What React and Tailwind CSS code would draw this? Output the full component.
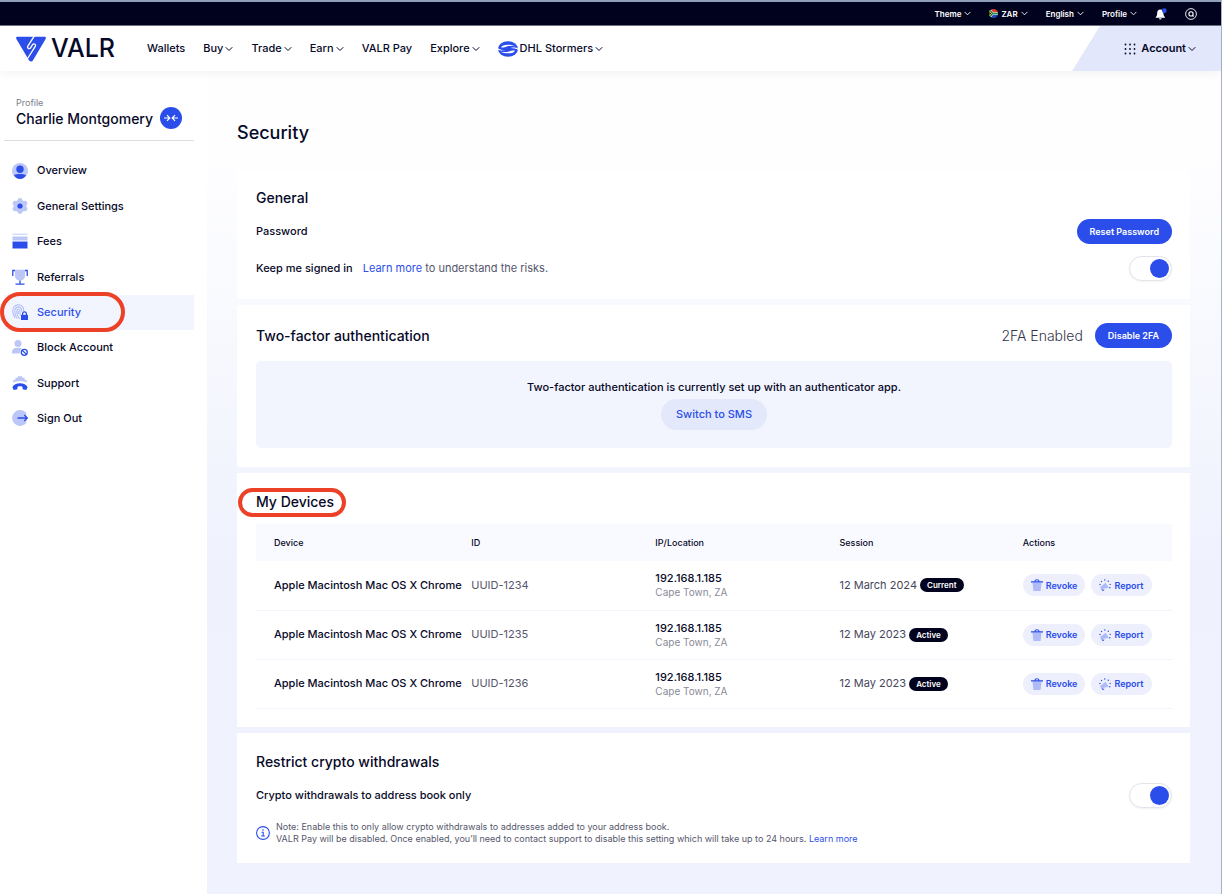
import { useState } from "react";

const Chevron = ({ className = "w-2 h-2" }) => (
  <svg className={className} viewBox="0 0 8 8" fill="none" stroke="currentColor" strokeWidth="1" strokeLinecap="round" strokeLinejoin="round" aria-hidden="true">
    <path d="M1 2.500 4 5.500 7 2.500" />
  </svg>
);

const icons = {
  overview: (
    <>
      <circle cx="8" cy="8" r="8" fill="#bcc7f8" />
      <circle cx="8" cy="6.200" r="3.700" fill="#2b4eea" />
      <path d="M2 12.200C4 10.900 6 11 8 11s4 0 6 1.200C12.700 14.600 10.500 16 8 16s-4.700-1.400-6-3.800Z" fill="#2b4eea" />
    </>
  ),
  settings: (
    <>
      <g fill="#bcc7f8">
        <circle cx="8" cy="8" r="6.300" />
        <circle cx="8" cy="2.500" r="2.400" />
        <circle cx="8" cy="13.500" r="2.400" />
        <circle cx="3.200" cy="5.200" r="2.500" />
        <circle cx="12.800" cy="5.200" r="2.500" />
        <circle cx="3.200" cy="10.800" r="2.500" />
        <circle cx="12.800" cy="10.800" r="2.500" />
      </g>
      <circle cx="8" cy="8" r="2.600" fill="#2b4eea" />
    </>
  ),
  fees: (
    <>
      <path d="M0.500 0.500h15v1.500h-15z" fill="#d5dcfb" />
      <path d="M0.500 3.500h15v4h-15z" fill="#bcc7f8" />
      <path d="M0.500 8.500h15v7h-15z" fill="#2b4eea" />
    </>
  ),
  referrals: (
    <>
      <path d="M3 .8h10v6.200c0 2.800-2 4.500-5 4.500S3 9.800 3 7Z" fill="#bcc7f8" />
      <path d="M3 1.500H.8V7M13 1.500h2.200V7M8 11.500V15M3.500 15.200h9" fill="none" stroke="#2b4eea" strokeWidth="1.300" />
    </>
  ),
  security: (
    <>
      <g fill="none" stroke="#b3bff6" strokeWidth="1.100" strokeLinecap="round">
        <path d="M3 13.500C1.300 11.500.8 9.500.8 7.300.8 3.500 3 .9 6.300.9s5.400 2.500 5.400 6" />
        <path d="M5 14.200C3.400 12 2.800 10 2.800 7.600c0-2.700 1.200-4.500 3.500-4.500s3.500 1.700 3.500 4.400" />
        <path d="M7.300 14.400C5.300 12 4.700 10 4.700 7.700c0-1.500.5-2.400 1.600-2.400s1.600 1 1.600 2.400c0 1.400.2 2.500.6 3.500" />
        <path d="M6.300 7.500v2" />
      </g>
      <path d="M9 10.800h7V16H9z" fill="#2b4eea" />
      <path d="M10.600 11V9.700a1.900 1.900 0 0 1 3.800 0V11" fill="none" stroke="#2b4eea" strokeWidth="1.200" />
    </>
  ),
  block: (
    <>
      <circle cx="6" cy="3.500" r="3.500" fill="#bcc7f8" />
      <path d="M0 13.500V12c0-2.500 2-4.200 4.500-4.200h3c1 0 1.800.2 2.400.7A5 5 0 0 0 8 13.500Z" fill="#bcc7f8" />
      <circle cx="12.300" cy="12.300" r="3" fill="none" stroke="#2b4eea" strokeWidth="1.300" />
      <path d="m10.200 10.200 4.200 4.200" stroke="#2b4eea" strokeWidth="1.300" />
    </>
  ),
  support: (
    <>
      <path d="M.8 7.500 1.500 5 3.300 4.800 3.500 2.800 5.500 2.700 6.300.8 8 1.500 9.700.8 10.500 2.700 12.500 2.800 12.700 4.800 14.500 5 15.200 7.500C11 5.800 5 5.800.8 7.500Z" fill="#bcc7f8" />
      <path d="M.4 12.200C1.500 9.800 4.500 8.300 8 8.300s6.500 1.500 7.600 3.900l-1.300 2.800-3.600-.8-.3-2.500c-1.500-.6-3.300-.6-4.800 0l-.3 2.500-3.600.8Z" fill="#2b4eea" />
    </>
  ),
  signout: (
    <>
      <path d="M14.300 3A8 8 0 1 0 14.300 13Z" fill="#bcc7f8" />
      <path d="M5.500 8h9.800M12.300 5l3 3-3 3" fill="none" stroke="#2b4eea" strokeWidth="1.400" />
    </>
  ),
};

const sideItems = [
  ["Overview", "overview"],
  ["General Settings", "settings"],
  ["Fees", "fees"],
  ["Referrals", "referrals"],
  ["Security", "security"],
  ["Block Account", "block"],
  ["Support", "support"],
  ["Sign Out", "signout"],
];

const devices = [
  { id: "UUID-1234", date: "12 March 2024", status: "Current" },
  { id: "UUID-1235", date: "12 May 2023", status: "Active" },
  { id: "UUID-1236", date: "12 May 2023", status: "Active" },
];

function Toggle({ id }) {
  const [on, setOn] = useState(true);
  return (
    <input
      id={id}
      type="checkbox"
      role="switch"
      checked={on}
      onChange={(e) => setOn(e.target.checked)}
      className="flex h-[25px] w-[43px] shrink-0 cursor-pointer appearance-none items-center rounded-full border border-[#e3e4ea] bg-white px-[2px] shadow-xs before:block before:size-[19px] before:rounded-full before:bg-gray-400 checked:justify-end checked:before:bg-[#2b4eea]"
    />
  );
}

function TopButton({ children }) {
  return (
    <button type="button" className="flex items-center gap-[3px]">
      {children}
      <Chevron className="size-[7px]" />
    </button>
  );
}

function NavLink({ children, menu }) {
  return menu ? (
    <button type="button" className="flex items-center gap-[2px]">
      {children}
      <Chevron />
    </button>
  ) : (
    <a href="#">{children}</a>
  );
}

function Header() {
  return (
    <header className="relative">
      <div className="flex h-[26px] items-center justify-end border-t-2 border-b border-t-[#929fbb] border-b-[#6d6f84] bg-[#01031e] pr-6 text-[8px] font-semibold text-white">
        <div className="flex items-center gap-[18px]">
          <TopButton>Theme</TopButton>
          <TopButton>
            <svg className="size-[9px]" viewBox="0 0 10 10" aria-hidden="true">
              <clipPath id="flag"><circle cx="5" cy="5" r="5" /></clipPath>
              <g clipPath="url(#flag)">
                <path d="M0 0h10v5H0z" fill="#e0392b" />
                <path d="M0 5h10v5H0z" fill="#2447b8" />
                <path d="M0 0 4 5h6M0 10l4-5" stroke="#fff" strokeWidth="2.600" fill="none" />
                <path d="M0 0 4 5h6M0 10l4-5" stroke="#1d8a4e" strokeWidth="1.600" fill="none" />
                <path d="M0 2 2.700 5 0 8Z" fill="#111" stroke="#f5b921" strokeWidth=".9" />
              </g>
            </svg>
            ZAR
          </TopButton>
          <TopButton>English</TopButton>
          <TopButton>Profile</TopButton>
          <button type="button" aria-label="Notifications">
            <svg className="size-[12px]" viewBox="0 0 12 12" aria-hidden="true">
              <path d="M5.300 1.500c2 0 3.100 1.500 3.100 3.500 0 2.200.6 3.200 1.600 4.100v.7H.7v-.7c1-.9 1.500-1.900 1.500-4.100 0-2 1.100-3.500 3.100-3.500Z" fill="#fff" />
              <path d="M4 10.300h2.700a1.350 1.300 0 0 1-2.700 0Z" fill="#fff" />
              <circle cx="9.300" cy="2.700" r="2.400" fill="#2b4eea" />
            </svg>
          </button>
          <button type="button" aria-label="Search">
            <svg className="size-[12px]" viewBox="0 0 12 12" fill="none" stroke="#fff" aria-hidden="true">
              <circle cx="6" cy="6" r="5.400" strokeWidth=".9" />
              <circle cx="6" cy="5.900" r="2.100" strokeWidth="1.100" />
              <path d="m7.400 7.300 1.200 1.200" strokeWidth="1.100" />
            </svg>
          </button>
        </div>
      </div>
      <div className="flex h-[45px] items-center bg-white pl-4 shadow-[0_2px_10px_rgba(0,0,0,0.05)]">
        <a href="#" className="flex w-[131px] items-center gap-[5px]">
          <svg className="h-[26px] w-[30px] shrink-0" viewBox="0 0 30 26" aria-hidden="true">
            <path d="M1.600.7h26.800c1.300 0 1.900 1 1.200 2.200L16.900 24.400c-.9 1.500-2.900 1.500-3.800 0L.4 2.900C-.3 1.700.3.700 1.600.7Z" fill="#2b4eea" />
            <path d="M18.400-.2 12 9.800c-.8 1.400-.4 2.300.5 2.700.8.400 1.600.1 2.200-.9l1.700-2.700c.7-1 1.500-1.300 2.300-.9.900.5 1.200 1.300.4 2.600L11.600 22.500" fill="none" stroke="#fff" strokeWidth="1.300" />
          </svg>
          <span className="text-[25px] leading-none font-medium">VALR</span>
        </a>
        <nav aria-label="Main" className="flex items-center gap-[18px] text-[11px] font-medium whitespace-nowrap">
          <NavLink>Wallets</NavLink>
          <NavLink menu>Buy</NavLink>
          <NavLink menu>Trade</NavLink>
          <NavLink menu>Earn</NavLink>
          <NavLink>VALR Pay</NavLink>
          <NavLink menu>Explore</NavLink>
          <NavLink menu>
            <svg className="h-[16px] w-[20px]" viewBox="0 0 20 16" aria-hidden="true">
              <ellipse cx="10" cy="8" rx="10" ry="7.700" fill="#2b4eea" />
              <g fill="#fff">
                <path d="M3 6.300C4 3.500 11 2.500 17.800 5.300 12.500 4.800 9 5 8.300 5.800 7.500 6.500 4 6.800 3 6.300Z" />
                <path d="M17 9.700C16 12.500 9 13.500 2.200 10.700 7.500 11.200 11 11 11.700 10.200 12.500 9.500 16 9.200 17 9.700Z" />
                <path d="M0 7.200C1.500 8.600 4.500 8.900 7.500 9 4.500 9.700 1.500 9.600 0 8.800Z" />
                <path d="M20 8.800C18.500 7.400 15.500 7.100 12.500 7 15.500 6.300 18.500 6.400 20 7.200Z" />
              </g>
            </svg>
            DHL Stormers
          </NavLink>
        </nav>
        <button type="button" className="ml-auto flex h-full w-[149px] items-center justify-end gap-[5px] bg-[#e2e7fb] pr-[25px] text-[11px] font-semibold [clip-path:polygon(28px_0,100%_0,100%_100%,0_100%)]">
          <svg className="size-[12px]" viewBox="0 0 12 12" fill="currentColor" aria-hidden="true">
            {[1.5, 6, 10.5].map((y) => [1.5, 6, 10.5].map((x) => <circle key={x + "-" + y} cx={x} cy={y} r=".9" />))}
          </svg>
          <span className="flex items-center gap-[2px]">
            Account
            <Chevron />
          </span>
        </button>
      </div>
    </header>
  );
}

function Sidebar() {
  return (
    <aside className="w-[207px] shrink-0 bg-white pr-[13px] pl-1">
      <div className="flex h-[70px] items-end justify-between border-b border-[#dcdde1] px-3 pb-[11px]">
        <div>
          <p className="text-[9px] leading-[12px] text-[#7d7e8c]">Profile</p>
          <p className="text-[14px] leading-[20px] font-medium whitespace-nowrap">Charlie Montgomery</p>
        </div>
        <button type="button" aria-label="Switch profile" className="flex size-[22px] items-center justify-center rounded-full bg-[#2b4eea]">
          <svg className="h-[8px] w-[14px]" viewBox="0 0 14 8" fill="none" stroke="#fff" strokeWidth="1.200" aria-hidden="true">
            <path d="M0 4h5.500M3 1.200 5.800 4 3 6.800M14 4H8.500M11 1.200 8.200 4 11 6.800" />
          </svg>
        </button>
      </div>
      <nav aria-label="Profile" className="mt-3 grid h-[283px] auto-rows-fr text-[11px] font-medium">
        {sideItems.map(([label, icon]) => (
          <a
            key={label}
            href="#"
            className={
              icon === "security"
                ? "relative flex items-center gap-[9px] bg-[#f3f5fe] pl-2 text-[#2b4eea]"
                : "relative flex items-center gap-[9px] pl-2"
            }
          >
            <svg className="size-[16px]" viewBox="0 0 16 16" aria-hidden="true">{icons[icon]}</svg>
            {label}
            {icon === "security" && <span className="absolute -top-[3px] -left-1 h-[40px] w-[125px] rounded-full border-4 border-[#ec4126]" />}
          </a>
        ))}
      </nav>
    </aside>
  );
}

const primary = "h-[25px] rounded-full bg-[#2b4eea] px-[13px] text-[9px] font-semibold text-white";
const pill = "flex h-[22px] items-center gap-[3px] rounded-full bg-[#edeffd] px-2 text-[9px] font-semibold text-[#2b4eea]";

function Devices() {
  return (
    <table className="mt-[10px] w-full table-fixed border-collapse text-left text-[11px]">
      <thead className="bg-[#f9faff] text-[9px]">
        <tr className="h-[37px]">
          <th scope="col" className="w-[23.5%] pl-[18px] font-medium">Device</th>
          <th scope="col" className="w-[20.1%] font-medium">ID</th>
          <th scope="col" className="w-[20.1%] font-medium">IP/Location</th>
          <th scope="col" className="w-[20%] font-medium">Session</th>
          <th scope="col" className="font-medium">Actions</th>
        </tr>
      </thead>
      <tbody>
        {devices.map((d) => (
          <tr key={d.id} className="h-[49px] border-b border-[#f3f4fb] whitespace-nowrap">
            <td className="pl-[18px] font-medium">Apple Macintosh Mac OS X Chrome</td>
            <td className="text-[#55576b]">{d.id}</td>
            <td className="leading-[14px]">
              <div className="font-medium">192.168.1.185</div>
              <div className="text-[10px] text-[#8a8b98]">Cape Town, ZA</div>
            </td>
            <td>
              <div className="flex items-center gap-[3px]">
                <span className="text-[#45475c]">{d.date}</span>
                <span className="flex h-[14px] items-center rounded-full bg-[#01031e] px-[7px] text-[8px] font-semibold text-white">{d.status}</span>
              </div>
            </td>
            <td>
              <div className="flex gap-[6px]">
                <button type="button" className={pill}>
                  <svg className="size-[12px]" viewBox="0 0 12 12" aria-hidden="true">
                    <path d="M1.500 3.500h9L9.600 12H2.400Z" fill="#aebbf6" />
                    <path d="M0 2.900h12M4 2.700C4 1.200 4.800.7 6 .7s2 .5 2 2" fill="none" stroke="#2b4eea" strokeWidth="1.100" />
                  </svg>
                  Revoke
                </button>
                <button type="button" className={pill}>
                  <svg className="size-[12px]" viewBox="0 0 12 12" aria-hidden="true">
                    <path d="m6.500 3.800 3.300 5L2.300 10.300 1 8.300Z" fill="#aebbf6" />
                    <g fill="#2b4eea">
                      <circle cx="5.800" cy="1" r=".7" /><circle cx="9.300" cy="2.200" r=".7" /><circle cx="2.500" cy="2.500" r=".7" />
                      <circle cx="11.200" cy="5.400" r=".7" /><circle cx="1" cy="5.500" r=".7" /><circle cx="10.800" cy="8.800" r=".7" />
                    </g>
                    <path d="M3 10.200 3.500 11.500 5.200 11" fill="none" stroke="#2b4eea" />
                  </svg>
                  Report
                </button>
              </div>
            </td>
          </tr>
        ))}
      </tbody>
    </table>
  );
}

const card = "bg-white pr-[18px] pl-[19px]";
const heading = "text-[14px] leading-[24px] font-medium";

export default function App() {
  return (
    <div className="flex min-h-screen flex-col border-r border-[#a9b1c3] bg-white font-['Inter','Liberation_Sans',sans-serif] text-[#070928]">
      <Header />
      <div className="flex flex-1">
        <Sidebar />
        <main className="min-w-0 flex-1 bg-linear-to-b from-[#fefeff] from-10% via-[#eff2fd] via-60% to-[#f0f3fd] pt-[50px] pr-[31px] pb-[30px] pl-[30px]">
          <h1 className="text-[18px] leading-[24px] font-medium">Security</h1>
          <div className="mt-[25px] flex flex-col gap-[6px]">
            <section className={card + " pt-4 pb-[18px]"}>
              <h2 className={heading}>General</h2>
              <div className="mt-[9px] flex h-[25px] items-center justify-between text-[11px] font-medium">
                Password
                <button type="button" className={primary}>Reset Password</button>
              </div>
              <div className="mt-3 flex h-[25px] items-center justify-between text-[11px]">
                <div className="flex gap-[10px]">
                  <label htmlFor="signed-in" className="font-medium">Keep me signed in</label>
                  <p className="text-[#55576b]">
                    <a href="#" className="text-[#2b4eea]">Learn more</a> to understand the risks.
                  </p>
                </div>
                <Toggle id="signed-in" />
              </div>
            </section>

            <section className={card + " pt-[18px] pb-[19px]"}>
              <div className="flex h-[25px] items-center justify-between">
                <h2 className={heading}>Two-factor authentication</h2>
                <div className="flex items-center gap-3">
                  <span className="text-[14px] font-light text-[#33354c]">2FA Enabled</span>
                  <button type="button" className={primary}>Disable 2FA</button>
                </div>
              </div>
              <div className="mt-[13px] flex h-[87px] flex-col items-center rounded-[5px] bg-[#f3f5fe] pt-[18px]">
                <p className="text-[11px] leading-[16px] font-medium">Two-factor authentication is currently set up with an authenticator app.</p>
                <button type="button" className="mt-1 h-[31px] rounded-full bg-[#e3e8fb] px-[15px] text-[11px] font-medium text-[#2b4eea]">Switch to SMS</button>
              </div>
            </section>

            <section className={card + " pt-[17px] pb-[18px]"}>
              <h2 className={heading + " relative"}>
                My Devices
                <span className="absolute -top-[2px] -left-[18px] h-[29px] w-[108px] rounded-full border-4 border-[#ec4126]" />
              </h2>
              <Devices />
            </section>

            <section className={card + " pt-[17px] pb-[18px]"}>
              <h2 className={heading}>Restrict crypto withdrawals</h2>
              <div className="mt-[9px] flex h-[25px] items-center justify-between text-[11px]">
                <label htmlFor="restrict" className="font-medium">Crypto withdrawals to address book only</label>
                <Toggle id="restrict" />
              </div>
              <div className="mt-[13px] flex items-center gap-[6px]">
                <svg className="size-[14px]" viewBox="0 0 14 14" fill="none" stroke="#2b4eea" aria-hidden="true">
                  <circle cx="7" cy="7" r="6.400" strokeWidth="1.100" />
                  <path d="M5.500 6.200H7.200V10M5.200 10h3.700" strokeWidth="1.100" />
                  <circle cx="7" cy="4" r=".8" fill="#2b4eea" stroke="none" />
                </svg>
                <p className="text-[9px] leading-[12px] text-[#55576b]">
                  Note: Enable this to only allow crypto withdrawals to addresses added to your address book.
                  <br />
                  VALR Pay will be disabled. Once enabled, you’ll need to contact support to disable this setting which will take up to 24 hours.{" "}
                  <a href="#" className="text-[#2b4eea]">Learn more</a>
                </p>
              </div>
            </section>
          </div>
        </main>
      </div>
    </div>
  );
}
